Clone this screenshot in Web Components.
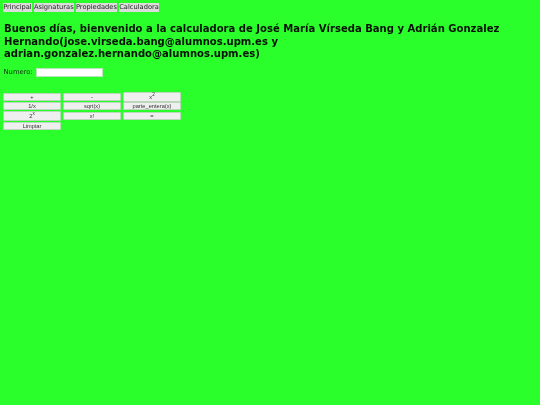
<!DOCTYPE html>
<html><head><meta charset="utf-8"><style>
html,body{margin:0;background:#2bff2b;height:100%;overflow:hidden}
body{font-family:"DejaVu Sans",sans-serif;color:#000}
</style></head><body>
<calc-page>
<calc-nav><calc-tab>Principal</calc-tab><calc-tab>Asignaturas</calc-tab><calc-tab>Propiedades</calc-tab><calc-tab>Calculadora</calc-tab></calc-nav>
<calc-title>Buenos días, bienvenido a la calculadora de José María Vírseda Bang y Adrián Gonzalez Hernando(jose.virseda.bang@alumnos.upm.es y adrian.gonzalez.hernando@alumnos.upm.es)</calc-title>
<calc-field>Numero:</calc-field>
<calc-pad>
<calc-key>+</calc-key><calc-key>-</calc-key><calc-key>x<sup>2</sup></calc-key>
<calc-key>1/x</calc-key><calc-key>sqrt(x)</calc-key><calc-key>parte_entera(x)</calc-key>
<calc-key>2<sup>x</sup></calc-key><calc-key>x!</calc-key><calc-key>=</calc-key>
<calc-key>Limpiar</calc-key>
</calc-pad>
</calc-page>
<script>
function def(name,css,html){
  customElements.define(name,class extends HTMLElement{
    constructor(){super();this.attachShadow({mode:"open"}).innerHTML="<style>"+css+"</style>"+html;}
  });
}
def("calc-page",":host{display:block;padding:3px 3px 0;will-change:opacity}","<slot></slot>");
def("calc-nav",":host{display:flex;gap:2px;height:9px;align-items:stretch}","<slot></slot>");
def("calc-tab",":host{display:block;background:#dcdcdc;font:6.7px/9px 'DejaVu Sans',sans-serif;color:#222;white-space:nowrap;padding:0 .15px}","<slot></slot>");
def("calc-title",":host{display:block;font:bold 10.05px/12.5px 'DejaVu Sans',sans-serif;margin:11px 0 0 1px;width:510px;color:#061006}","<slot></slot>");
def("calc-field",":host{display:flex;align-items:center;gap:3px;margin-top:7px;height:9px;font:6.8px 'DejaVu Sans',sans-serif;color:#0a300a;padding-left:.5px}",
 "<slot></slot><span style='display:block;box-sizing:border-box;width:67px;height:9px;background:#fff;border:1px solid #b5e6b5'></span>");
def("calc-pad",":host{display:grid;grid-template-columns:repeat(3,58px);column-gap:2px;row-gap:.67px;margin-top:15px;width:178px;align-items:center}","<slot></slot>");
def("calc-key",":host{display:block;box-sizing:border-box;height:8px;background:#efefef;border:1px solid #bcd8bc;border-radius:1px;text-align:center;font:5.7px/6px 'Liberation Sans',sans-serif;color:#333}:host(:nth-child(3)),:host(:nth-child(7)){height:10px;line-height:9px}:host(:nth-child(10)){margin-top:.6px}::slotted(sup){font-size:4.6px;line-height:0}","<slot></slot>");
</script>
</body></html>
